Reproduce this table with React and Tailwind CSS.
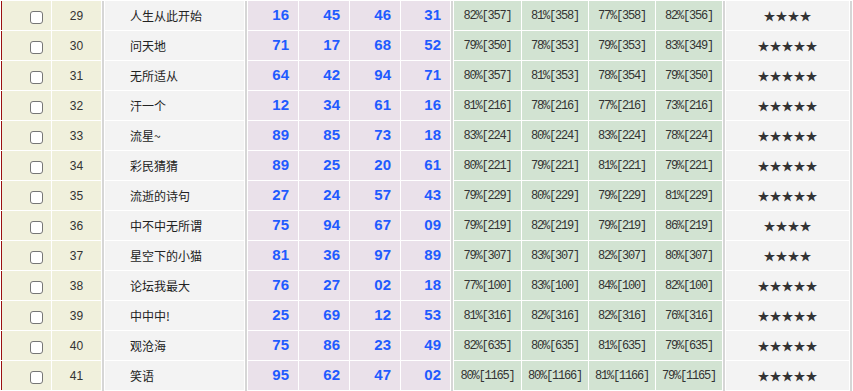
const ROWS = [
  [29, '人生从此开始', ['16', '45', '46', '31'], ['82%[357]', '81%[358]', '77%[358]', '82%[356]'], 4],
  [30, '问天地', ['71', '17', '68', '52'], ['79%[350]', '78%[353]', '79%[353]', '83%[349]'], 5],
  [31, '无所适从', ['64', '42', '94', '71'], ['80%[357]', '81%[353]', '78%[354]', '79%[350]'], 5],
  [32, '汗一个', ['12', '34', '61', '16'], ['81%[216]', '78%[216]', '77%[216]', '73%[216]'], 5],
  [33, '流星~', ['89', '85', '73', '18'], ['83%[224]', '80%[224]', '83%[224]', '78%[224]'], 5],
  [34, '彩民猜猜', ['89', '25', '20', '61'], ['80%[221]', '79%[221]', '81%[221]', '79%[221]'], 5],
  [35, '流逝的诗句', ['27', '24', '57', '43'], ['79%[229]', '80%[229]', '79%[229]', '81%[229]'], 5],
  [36, '中不中无所谓', ['75', '94', '67', '09'], ['79%[219]', '82%[219]', '79%[219]', '86%[219]'], 4],
  [37, '星空下的小猫', ['81', '36', '97', '89'], ['79%[307]', '83%[307]', '82%[307]', '80%[307]'], 4],
  [38, '论坛我最大', ['76', '27', '02', '18'], ['77%[100]', '83%[100]', '84%[100]', '82%[100]'], 5],
  [39, '中中中!', ['25', '69', '12', '53'], ['81%[316]', '82%[316]', '82%[316]', '76%[316]'], 5],
  [40, '观沧海', ['75', '86', '23', '49'], ['82%[635]', '80%[635]', '81%[635]', '79%[635]'], 5],
  [41, '笑语', ['95', '62', '47', '02'], ['80%[1165]', '80%[1166]', '81%[1166]', '79%[1165]'], 5],
];

const PURPLE_W = ['w-[50px]', 'w-[50px]', 'w-[50px]', 'w-[49px]'];
const GREEN_W = ['w-[67px]', 'w-[66px]', 'w-[66px]', 'w-[66px]'];

// gray divider that runs through the 1px row gap so the column looks continuous
function Sep() {
  return <div className="w-[2px] h-[30px] self-start shrink-0 bg-[#d6d6d6]" />;
}

function Row({ row }) {
  const [no, name, picks, rates, stars] = row;
  return (
    <div className="flex h-[29px] gap-[1px] pl-[1px]">
      <div className="w-[50px] shrink-0 border-l border-[#9a1010] bg-[#f0f0dc] flex items-center pl-[28px] pt-[3px]">
        <div className="w-[13px] h-[13px] rounded-[3px] border border-[#767676] bg-white" />
      </div>
      <div className="w-[49px] shrink-0 bg-[#f0f0dc] flex items-center justify-center text-[12px] text-[#333] font-['Liberation_Sans',sans-serif]">
        {no}
      </div>
      <Sep />
      <div className="w-[139px] shrink-0 bg-[#f3f3f3] flex items-center pl-[25px] text-[12px] text-[#222] font-['Noto_Sans_CJK_SC',sans-serif]">
        {name}
      </div>
      <Sep />
      {picks.map((p, i) => (
        <div
          key={i}
          className={`${PURPLE_W[i]} shrink-0 bg-[#eae1ea] flex items-center justify-end pr-[9px] text-[15px] font-bold text-[#1f5bff] font-['Liberation_Sans',sans-serif]`}
        >
          {p}
        </div>
      ))}
      <Sep />
      {rates.map((r, i) => (
        <div
          key={i}
          className={`${GREEN_W[i]} shrink-0 bg-[#d2e3d2] flex items-center justify-center text-[12px] tracking-[-1.2px] text-[#333] font-['Liberation_Mono',monospace]`}
        >
          {r}
        </div>
      ))}
      <Sep />
      <div className="w-[123px] shrink-0 bg-[#f3f3f3] flex items-center justify-center text-[12px] text-[#333] font-['Noto_Sans_CJK_SC',sans-serif]">
        {'★'.repeat(stars)}
      </div>
      <Sep />
    </div>
  );
}

export default function App() {
  return (
    <div className="w-[853px] h-[391px] overflow-hidden bg-white pt-[1px] flex flex-col gap-[1px]">
      {ROWS.map((row) => (
        <Row key={row[0]} row={row} />
      ))}
    </div>
  );
}
